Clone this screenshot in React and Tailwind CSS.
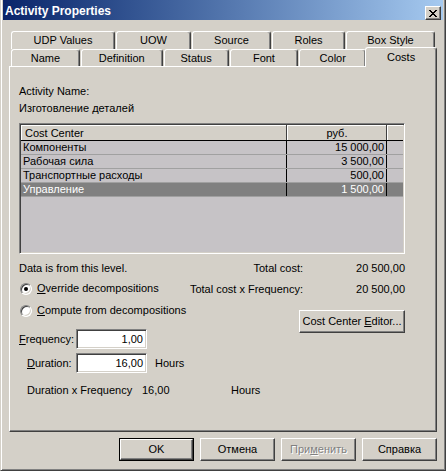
import React from 'react';

const tabsBack = [
  { label: 'UDP Values', cls: 'w-[104px]' },
  { label: 'UOW', cls: 'w-[75px]' },
  { label: 'Source', cls: 'w-[79px]' },
  { label: 'Roles', cls: 'w-[73px]' },
  { label: 'Box Style', cls: 'w-[89px]' },
];

const tabsFront = [
  { label: 'Name', cls: 'w-[69px]' },
  { label: 'Definition', cls: 'w-[82px]' },
  { label: 'Status', cls: 'w-[65px]' },
  { label: 'Font', cls: 'w-[69px]' },
  { label: 'Color', cls: 'w-[67px]' },
];

const rows = [
  { name: 'Компоненты', value: '15 000,00' },
  { name: 'Рабочая сила', value: '3 500,00' },
  { name: 'Транспортные расходы', value: '500,00' },
  { name: 'Управление', value: '1 500,00', selected: true },
];

const Tab = ({ label, cls }) => (
  <div
    className={`flex items-center justify-center h-full border-l border-t border-r border-l-white border-t-white border-r-[#404040] rounded-t-[3px] shadow-[inset_-1px_0_0_#808080] ${cls}`}
  >
    {label}
  </div>
);

const Button = ({ children, isDefault, disabled, cls = 'w-[75px]' }) => (
  <div className={`h-[23px] flex ${cls} ${isDefault ? 'border border-black' : ''}`}>
    <div
      className={`flex-1 flex items-center justify-center border border-l-white border-t-white border-r-[#404040] border-b-[#404040] shadow-[inset_-1px_-1px_0_#808080] ${
        disabled ? 'text-[#808080] [text-shadow:1px_1px_0_#fff]' : ''
      }`}
    >
      <span className="whitespace-nowrap">{children}</span>
    </div>
  </div>
);

const Radio = ({ checked }) => (
  <div className="w-[12px] h-[12px] rounded-full bg-white border border-t-[#808080] border-l-[#808080] border-b-white border-r-white shadow-[inset_1px_1px_0_#404040,inset_-1px_-1px_0_#d4d0c8] flex items-center justify-center">
    {checked && <div className="w-[4px] h-[4px] rounded-full bg-black" />}
  </div>
);

const Field = ({ value }) => (
  <div className="w-[71px] h-[20px] bg-white border border-t-[#808080] border-l-[#808080] border-b-white border-r-white shadow-[inset_1px_1px_0_#404040,inset_-1px_-1px_0_#d4d0c8] flex items-center justify-end pr-[3px]">
    {value}
  </div>
);

const CostTable = () => (
  <div className="mt-[8px] w-[386px] h-[131px] flex flex-col bg-[#c6c3c6] border border-t-[#808080] border-l-[#808080] border-b-white border-r-white shadow-[inset_1px_1px_0_#404040,inset_-1px_-1px_0_#d4d0c8] p-px">
    {/* header */}
    <div className="flex h-[16px] bg-[#d4d0c8] border-b border-black">
      <div className="w-[265px] pl-[3px] leading-[15px] border-l border-t border-l-white border-t-white">
        Cost Center
      </div>
      <div className="w-px bg-[#404040]" />
      <div className="w-[99px] text-center leading-[15px] border-l border-t border-l-white border-t-white">
        руб.
      </div>
      <div className="w-px bg-[#404040]" />
      <div className="flex-1 border-l border-t border-l-white border-t-white" />
    </div>
    {rows.map((r) => (
      <div
        key={r.name}
        className={`flex h-[14px] border-b border-[#a0a0a0] ${r.selected ? 'bg-[#808080] text-white' : ''}`}
      >
        <div className="w-[265px] pl-[2px] leading-[13px] whitespace-nowrap">{r.name}</div>
        <div className="w-px bg-black" />
        <div className="w-[99px] pr-[2px] text-right leading-[13px]">{r.value}</div>
        <div className="w-px bg-black" />
        <div className="flex-1" />
      </div>
    ))}
  </div>
);

export default function App() {
  return (
    <div className="w-[446px] h-[471px] bg-[#d4d0c8] text-[11px] text-black font-['Liberation_Sans',Arial,sans-serif] flex flex-col border-l border-r border-b border-l-[#d4d0c8] border-r-[#404040] border-b-[#404040] shadow-[inset_1px_0_0_#fff,inset_-1px_-1px_0_#808080] px-[2px] select-none">
      {/* title bar */}
      <div className="h-[20px] flex items-start justify-between bg-linear-to-r from-[#0a246a] to-[#a6caf0] pl-[2px] pr-[2px]">
        <div className="mt-[4px] text-white font-bold text-[12px] leading-[14px]">Activity Properties</div>
        <div className="mt-[6px] w-[16px] h-[14px] bg-[#d4d0c8] border border-l-white border-t-white border-r-[#404040] border-b-[#404040] shadow-[inset_-1px_-1px_0_#808080] flex items-center justify-center">
          <svg width="8" height="7" viewBox="0 0 8 7">
            <path d="M0 0 L7 7 M1 0 L8 7 M7 0 L0 7 M8 0 L1 7" stroke="#000" strokeWidth="1" />
          </svg>
        </div>
      </div>

      <div className="px-[6px] mt-[11px] flex flex-col">
        {/* tabs */}
        <div className="flex h-[18px] pl-[2px] gap-px">
          {tabsBack.map((t) => (
            <Tab key={t.label} {...t} />
          ))}
        </div>
        <div className="flex h-[17px] pl-[2px] gap-px items-end">
          {tabsFront.map((t) => (
            <Tab key={t.label} {...t} />
          ))}
          <div className="relative z-10 -ml-[2px] -mb-px h-[20px] w-[72px] bg-[#d4d0c8] flex items-center justify-center border-l border-t border-r border-l-white border-t-white border-r-[#404040] rounded-t-[3px] shadow-[inset_-1px_0_0_#808080]">
            Costs
          </div>
        </div>

        {/* panel */}
        <div className="h-[366px] flex flex-col pl-[9px] border border-l-white border-t-white border-r-[#404040] border-b-[#404040] shadow-[inset_-1px_-1px_0_#808080]">
          <div className="mt-[18px] leading-[13px]">Activity Name:</div>
          <div className="mt-[4px] leading-[13px]">Изготовление деталей</div>

          <CostTable />

          <div className="flex mt-[8px]">
            <div className="w-[168px] flex flex-col">
              <div className="leading-[13px]">Data is from this level.</div>
              <div className="mt-[7px] flex items-center leading-[13px]">
                <div className="ml-px"><Radio checked /></div>
                <span className="ml-[5px]"><u>O</u>verride decompositions</span>
              </div>
              <div className="mt-[9px] flex items-center leading-[13px] whitespace-nowrap">
                <div className="ml-px"><Radio /></div>
                <span className="ml-[5px]"><u>C</u>ompute from decompositions</span>
              </div>
              <div className="mt-[12px] flex items-center">
                <div className="w-[57px]"><u>F</u>requency:</div>
                <Field value="1,00" />
              </div>
              <div className="mt-[4px] flex items-center whitespace-nowrap">
                <div className="w-[57px] pl-[8px]"><u>D</u>uration:</div>
                <Field value="16,00" />
                <span className="ml-[8px]">Hours</span>
              </div>
            </div>

            <div className="w-[218px] flex flex-col">
              <div className="flex leading-[13px]">
                <div className="w-[116px] text-right whitespace-nowrap">Total cost:</div>
                <div className="flex-1 text-right">20 500,00</div>
              </div>
              <div className="mt-[8px] flex leading-[13px]">
                <div className="w-[116px] text-right whitespace-nowrap">Total cost x Frequency:</div>
                <div className="flex-1 text-right">20 500,00</div>
              </div>
              <div className="mt-[14px] self-end">
                <Button cls="w-[106px]">
                  Cost Center <u>E</u>ditor...
                </Button>
              </div>
            </div>
          </div>

          <div className="mt-[11px] flex leading-[13px] pl-[8px] whitespace-nowrap">
            <div className="w-[115px]">Duration x Frequency</div>
            <div className="w-[89px]">16,00</div>
            <div>Hours</div>
          </div>
        </div>

        {/* buttons */}
        <div className="mt-[6px] flex justify-end gap-[6px]">
          <Button isDefault>OK</Button>
          <Button>Отмена</Button>
          <Button disabled>
            При<u>м</u>енить
          </Button>
          <Button>Справка</Button>
        </div>
      </div>
    </div>
  );
}
